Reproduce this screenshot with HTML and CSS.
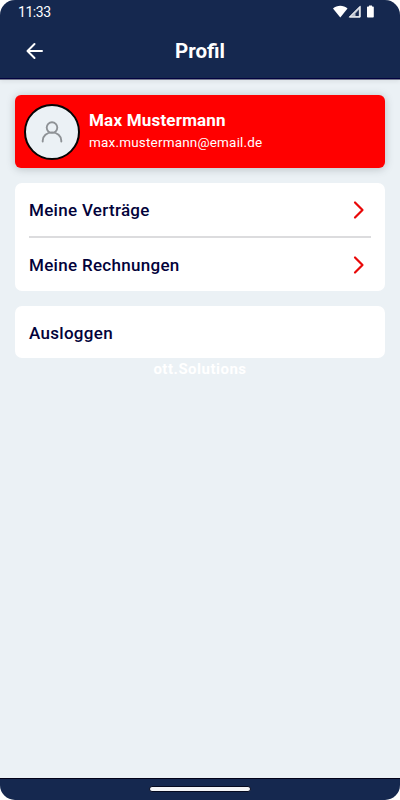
FILE: index.html
```html
<!DOCTYPE html>
<html lang="de">
<head>
<meta charset="utf-8">
<title>Profil</title>
<link rel="stylesheet" href="styles.css">
</head>
<body>
<div class="screen">
  <header class="header">
    <div class="status">
      <span class="time">11:33</span>
      <svg class="status-icons" width="42" height="14" viewBox="0 0 42 14">
        <path d="M0 3.6C4-.2 10.500-.2 14.500 3.600L7.300 12.500Z" fill="#fff"/>
        <path d="M27.500 .5V12.500H15.500Z" fill="#b9bfcb"/>
        <path d="M22.500 8.500L25.800 4.800V11H22.500Z" fill="#15284f"/>
        <path d="M27 1.500V12H16.500Z" fill="none" stroke="#fff"/>
        <path d="M36 .5h3v1h1q.8 0 .8 .8v9.400q0 .8-.8 .8h-5.200q-.8 0-.8-.8V2.300q0-.8.8-.8H36Z" fill="#fff"/>
      </svg>
    </div>
    <div class="navbar">
      <svg class="back" width="18" height="18" viewBox="0 0 18 18"><path d="M16 9H1.500M8.500 2L1.500 9l7 7"/></svg>
      <h1 class="title">Profil</h1>
    </div>
  </header>
  <main class="content">
    <section class="profile">
      <div class="avatar">
        <svg width="22" height="22" viewBox="0 0 22 22"><circle cx="11" cy="6.600" r="5.300"/><path d="M1.700 20.500v-.8a9.300 8.300 0 0 1 18.600 0v.8"/></svg>
      </div>
      <div class="person">
        <div class="name">Max Mustermann</div>
        <div class="email">max.mustermann@email.de</div>
      </div>
    </section>
    <nav class="card">
      <div class="row"><span>Meine Verträge</span><svg class="chevron" width="12" height="20" viewBox="0 0 12 20"><path d="M2 2.500l7.500 7.500-7.500 7.500"/></svg></div>
      <div class="row"><span>Meine Rechnungen</span><svg class="chevron" width="12" height="20" viewBox="0 0 12 20"><path d="M2 2.500l7.500 7.500-7.500 7.500"/></svg></div>
    </nav>
    <div class="card logout"><div class="row"><span>Ausloggen</span></div></div>
    <div class="brand">ott.Solutions</div>
  </main>
  <footer class="system-nav"><div class="handle"></div></footer>
</div>
</body>
</html>
```
FILE: styles.css
```css
* { box-sizing: border-box; }
body { margin: 0; background: #fff; font-family: Roboto, sans-serif; }
.screen { width: 400px; height: 800px; display: flex; flex-direction: column; overflow: hidden; border-radius: 15px; background: #ebf1f5; }
.header { height: 80px; flex: none; background: #15284f; border-bottom: 1px solid #76798f; box-shadow: inset 0 -1px #02023f, 0 2px 4px rgba(0,0,0,.06); color: #fff; }
.status { height: 23px; display: flex; justify-content: space-between; align-items: center; padding: 0 25px 0 18px; }
.time { font-size: 14px; line-height: 22px; letter-spacing: -.45px; }
.status-icons { display: block; }
.navbar { height: 56px; display: grid; grid-template-columns: 50px 1fr 50px; align-items: center; }
.back { margin-left: 26px; fill: none; stroke: #fff; stroke-width: 2; stroke-linecap: round; stroke-linejoin: round; }
.title { margin: 0; font-size: 20.500px; line-height: 24px; font-weight: 700; text-align: center; }
.content { flex: 1; padding: 15px 15px 0; }
.profile { height: 73px; padding: 0 9px; display: flex; align-items: center; gap: 9px; background: #f00; border-radius: 6px; box-shadow: 0 1px 9px rgba(50,60,70,.28); color: #fff; }
.avatar { width: 56px; height: 56px; flex: none; display: grid; place-items: center; border: 2px solid #050505; border-radius: 50%; background: #ebf1f5; }
.avatar svg { fill: none; stroke: #8e9296; stroke-width: 1.900; stroke-linecap: round; }
.person { margin-top: -1px; }
.name { font-size: 17px; line-height: 22px; font-weight: 700; letter-spacing: .2px; }
.email { font-size: 13.500px; line-height: 22px; letter-spacing: .18px; }
.card { margin-top: 15px; padding: 0 14px; background: #fff; border-radius: 7px; color: #02023a; }
.row { height: 55px; display: flex; align-items: center; justify-content: space-between; padding-right: 6px; font-size: 17px; font-weight: 500; letter-spacing: .3px; }
.row:first-child { height: 53px; padding-top: 1px; }
.row + .row { border-top: 2px solid #dcdcde; }
.logout .row:first-child { height: 52px; }
.chevron { fill: none; stroke: #e90808; stroke-width: 2.200; stroke-linecap: round; stroke-linejoin: round; }
.brand { margin-top: 1px; font-size: 15px; line-height: 20px; font-weight: 700; letter-spacing: .5px; text-align: center; color: #fff; }
.system-nav { height: 22px; flex: none; display: flex; align-items: center; justify-content: center; padding-bottom: 1px; background: #15284f; border-top: 1px solid #020218; }
.handle { width: 102px; height: 6px; border: 1px solid #050a20; border-radius: 3px; background: #f4f5f7; }
```
